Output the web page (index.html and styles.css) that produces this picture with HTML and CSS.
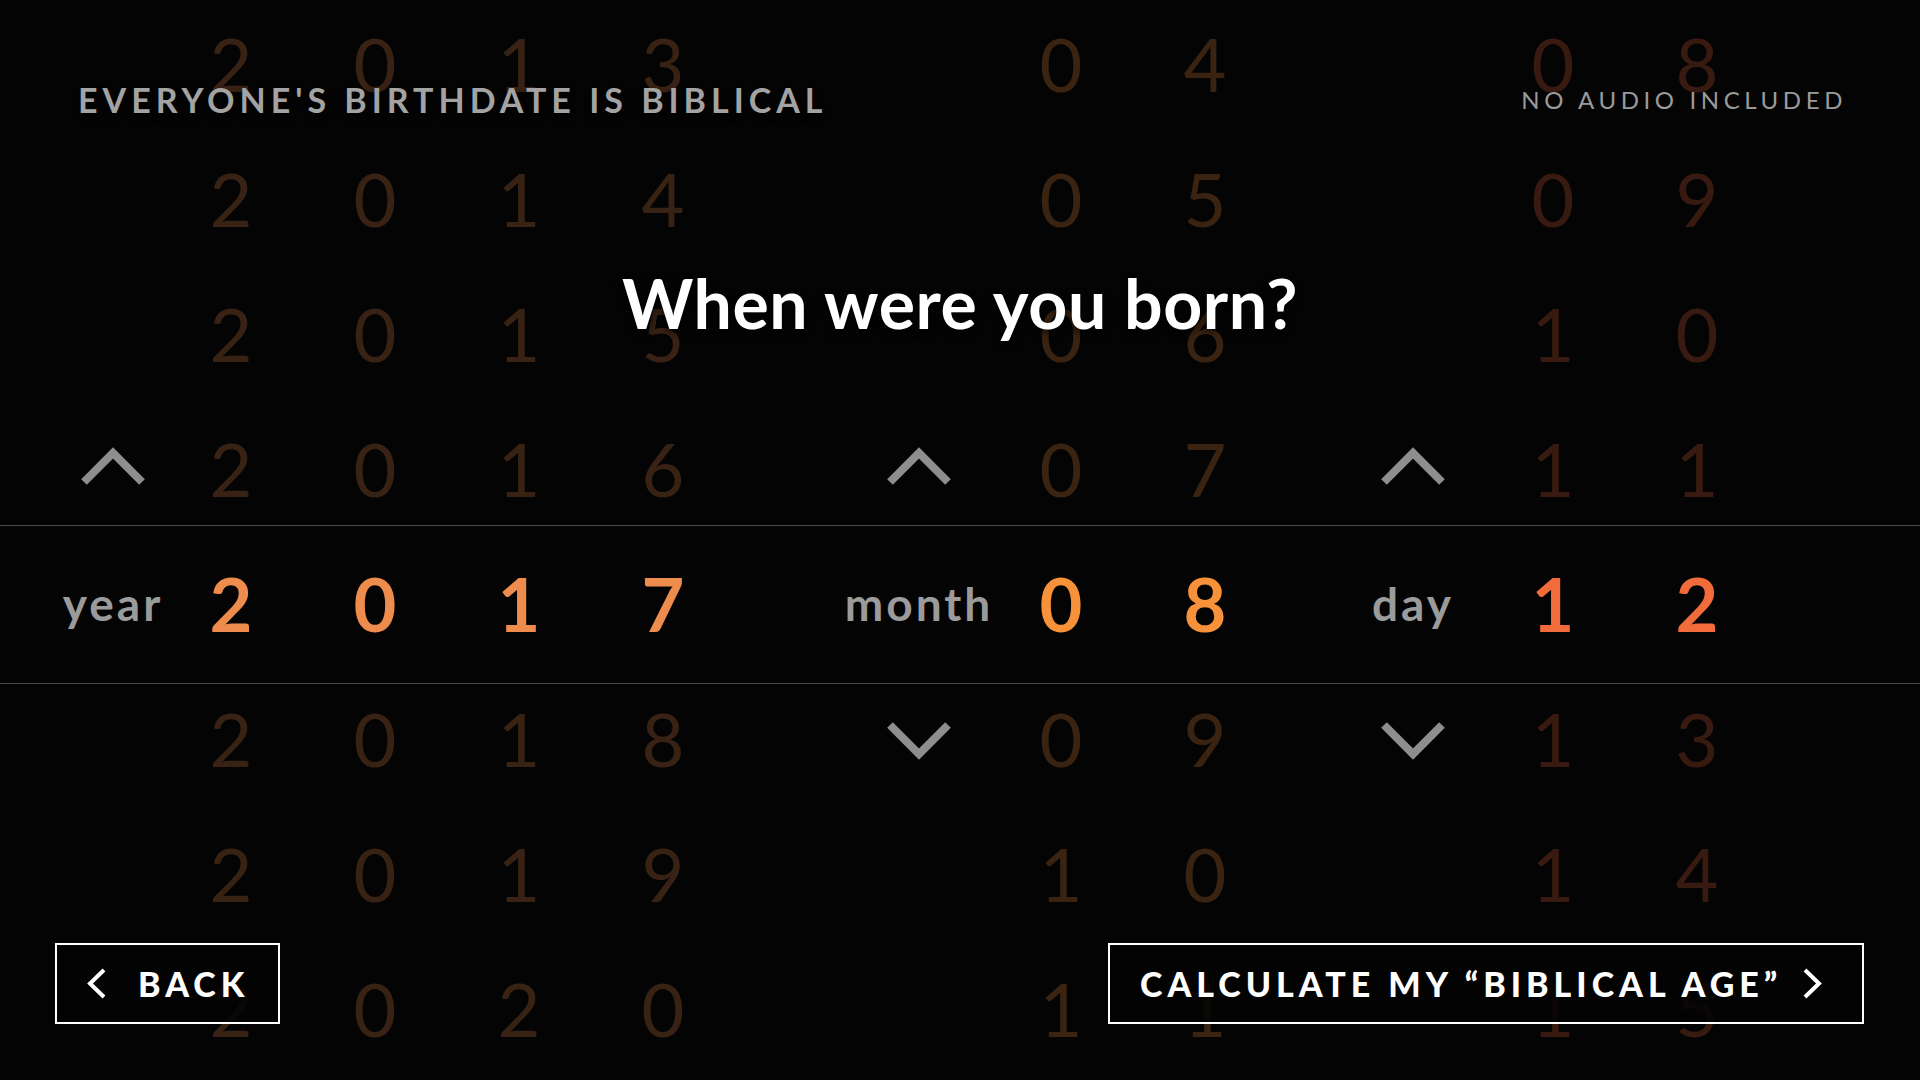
FILE: index.html
```html
<!DOCTYPE html>
<html lang="en">
<head>
<meta charset="utf-8">
<title>When were you born?</title>
<link rel="stylesheet" href="styles.css">
</head>
<body>
<main class="screen">
  <div class="wheel">
    <div class="group g-year">
      <div class="ctl">
        <div class="cell"></div><div class="cell"></div><div class="cell"></div>
        <div class="cell"><svg class="arrow up" viewBox="0 0 68 40"><polyline points="5,36 34,7 63,36"/></svg></div>
        <div class="cell label">year</div>
        <div class="cell"></div><div class="cell"></div><div class="cell"></div>
      </div>
      <div class="col"><div class="cell dim">2</div><div class="cell dim">2</div><div class="cell dim">2</div><div class="cell dim">2</div><div class="cell sel">2</div><div class="cell dim">2</div><div class="cell dim">2</div><div class="cell dim">2</div></div>
      <div class="col"><div class="cell dim">0</div><div class="cell dim">0</div><div class="cell dim">0</div><div class="cell dim">0</div><div class="cell sel">0</div><div class="cell dim">0</div><div class="cell dim">0</div><div class="cell dim">0</div></div>
      <div class="col"><div class="cell dim">1</div><div class="cell dim">1</div><div class="cell dim">1</div><div class="cell dim">1</div><div class="cell sel">1</div><div class="cell dim">1</div><div class="cell dim">1</div><div class="cell dim">2</div></div>
      <div class="col"><div class="cell dim">3</div><div class="cell dim">4</div><div class="cell dim">5</div><div class="cell dim">6</div><div class="cell sel">7</div><div class="cell dim">8</div><div class="cell dim">9</div><div class="cell dim">0</div></div>
    </div>
    <div class="group g-month">
      <div class="ctl">
        <div class="cell"></div><div class="cell"></div><div class="cell"></div>
        <div class="cell"><svg class="arrow up" viewBox="0 0 68 40"><polyline points="5,36 34,7 63,36"/></svg></div>
        <div class="cell label">month</div>
        <div class="cell"><svg class="arrow down" viewBox="0 0 68 40"><polyline points="5,4 34,33 63,4"/></svg></div>
        <div class="cell"></div><div class="cell"></div>
      </div>
      <div class="col"><div class="cell dim">0</div><div class="cell dim">0</div><div class="cell dim">0</div><div class="cell dim">0</div><div class="cell sel">0</div><div class="cell dim">0</div><div class="cell dim">1</div><div class="cell dim">1</div></div>
      <div class="col"><div class="cell dim">4</div><div class="cell dim">5</div><div class="cell dim">6</div><div class="cell dim">7</div><div class="cell sel">8</div><div class="cell dim">9</div><div class="cell dim">0</div><div class="cell dim">1</div></div>
    </div>
    <div class="group g-day">
      <div class="ctl">
        <div class="cell"></div><div class="cell"></div><div class="cell"></div>
        <div class="cell"><svg class="arrow up" viewBox="0 0 68 40"><polyline points="5,36 34,7 63,36"/></svg></div>
        <div class="cell label">day</div>
        <div class="cell"><svg class="arrow down" viewBox="0 0 68 40"><polyline points="5,4 34,33 63,4"/></svg></div>
        <div class="cell"></div><div class="cell"></div>
      </div>
      <div class="col"><div class="cell dim">0</div><div class="cell dim">0</div><div class="cell dim">1</div><div class="cell dim">1</div><div class="cell sel">1</div><div class="cell dim">1</div><div class="cell dim">1</div><div class="cell dim">1</div></div>
      <div class="col"><div class="cell dim">8</div><div class="cell dim">9</div><div class="cell dim">0</div><div class="cell dim">1</div><div class="cell sel">2</div><div class="cell dim">3</div><div class="cell dim">4</div><div class="cell dim">5</div></div>
    </div>
  </div>

  <div class="ui">
    <header class="top">
      <div class="brand">EVERYONE'S BIRTHDATE IS BIBLICAL</div>
      <div class="audio">NO AUDIO INCLUDED</div>
    </header>
    <h1 class="question">When were you born?</h1>
    <div class="band"></div>
    <footer class="actions">
      <button class="btn btn-back"><svg class="chev" viewBox="0 0 21 31"><polyline points="18,2 4,15.5 18,29"/></svg><span>BACK</span></button>
      <button class="btn btn-next"><span>CALCULATE MY “BIBLICAL AGE”</span><svg class="chev" viewBox="0 0 21 31"><polyline points="3,2 17,15.5 3,29"/></svg></button>
    </footer>
  </div>
</main>
</body>
</html>
```

FILE: styles.css
```css
html, body {
  margin: 0;
  padding: 0;
  background: #040404;
}
body {
  font-family: "Lato", "Open Sans", sans-serif;
  overflow: hidden;
}
.screen {
  width: 1920px;
  height: 1080px;
  display: grid;
  overflow: hidden;
  background: #040404;
}
.screen > * {
  grid-area: 1 / 1;
}

/* digit wheel */
.wheel {
  display: flex;
  margin-top: -4px;
  padding-left: 67px;
  height: 1080px;
}
.group {
  display: flex;
}
.g-year { --c: #ee8c4d; }
.g-month { --c: #f7923a; margin-left: 114px; }
.g-day { --c: #f26b3b; margin-left: 68px; }
.g-year .ctl { width: 92px; }
.g-month .ctl { width: 140px; }
.g-day .ctl { width: 136px; }
.ctl, .col {
  display: flex;
  flex-direction: column;
}
.col { width: 144px; }
.cell {
  height: 135px;
  flex: none;
  display: flex;
  align-items: center;
  justify-content: center;
  white-space: nowrap;
}
.col .cell {
  font-size: 74px;
  font-weight: 400;
  line-height: 135px;
  color: var(--c);
}
.col .dim { opacity: 0.22; }
.col .sel { font-weight: 700; }
.label {
  font-size: 46px;
  font-weight: 700;
  color: #9b9b9b;
  letter-spacing: 3px;
  line-height: 135px;
}
.arrow {
  width: 68px;
  height: 40px;
  fill: none;
  stroke: #8e8e8e;
  stroke-width: 8;
  stroke-linejoin: miter;
  stroke-linecap: butt;
}
.arrow.up { margin-top: -6px; }
.arrow.down { margin-top: 4px; }

/* overlay UI */
.ui {
  display: flex;
  flex-direction: column;
  height: 1080px;
  position: relative;
}
.top {
  display: flex;
  justify-content: space-between;
  align-items: center;
  padding: 83px 73px 0 78px;
}
.brand {
  font-size: 34px;
  line-height: 34px;
  font-weight: 700;
  letter-spacing: 5px;
  color: #a3a3a3;
  text-shadow: 0 4px 6px rgba(0,0,0,0.9);
}
.audio {
  font-size: 24px;
  line-height: 24px;
  font-weight: 400;
  letter-spacing: 4.6px;
  color: #9a9a9a;
}
.question {
  margin: 152px 0 0;
  text-align: center;
  font-size: 68px;
  line-height: 68px;
  font-weight: 700;
  color: #ffffff;
  letter-spacing: 0.6px;
  text-shadow: 0 3px 8px rgba(0,0,0,0.85);
}
.band {
  position: absolute;
  left: 0;
  right: 0;
  top: 525px;
  height: 157px;
  border-top: 1px solid #4a4a4a;
  border-bottom: 1px solid #4a4a4a;
  pointer-events: none;
}
.actions {
  margin-top: auto;
  display: flex;
  justify-content: space-between;
  padding: 0 56px 56px 55px;
}
.btn {
  display: flex;
  align-items: center;
  height: 81px;
  box-sizing: border-box;
  border: 2px solid #ffffff;
  background: rgba(3,3,3,0.88);
  color: #ffffff;
  font-family: "Lato", "Open Sans", sans-serif;
  font-size: 34px;
  font-weight: 900;
  letter-spacing: 5px;
  padding: 0;
  margin: 0;
  cursor: pointer;
}
.btn-back {
  width: 225px;
  padding-left: 29px;
  gap: 31px;
}
.btn-next {
  width: 756px;
  padding-left: 30px;
  gap: 20px;
}
.chev {
  width: 21px;
  height: 31px;
  fill: none;
  stroke: #ffffff;
  stroke-width: 4;
  stroke-linecap: butt;
  stroke-linejoin: miter;
  flex: none;
}
```
